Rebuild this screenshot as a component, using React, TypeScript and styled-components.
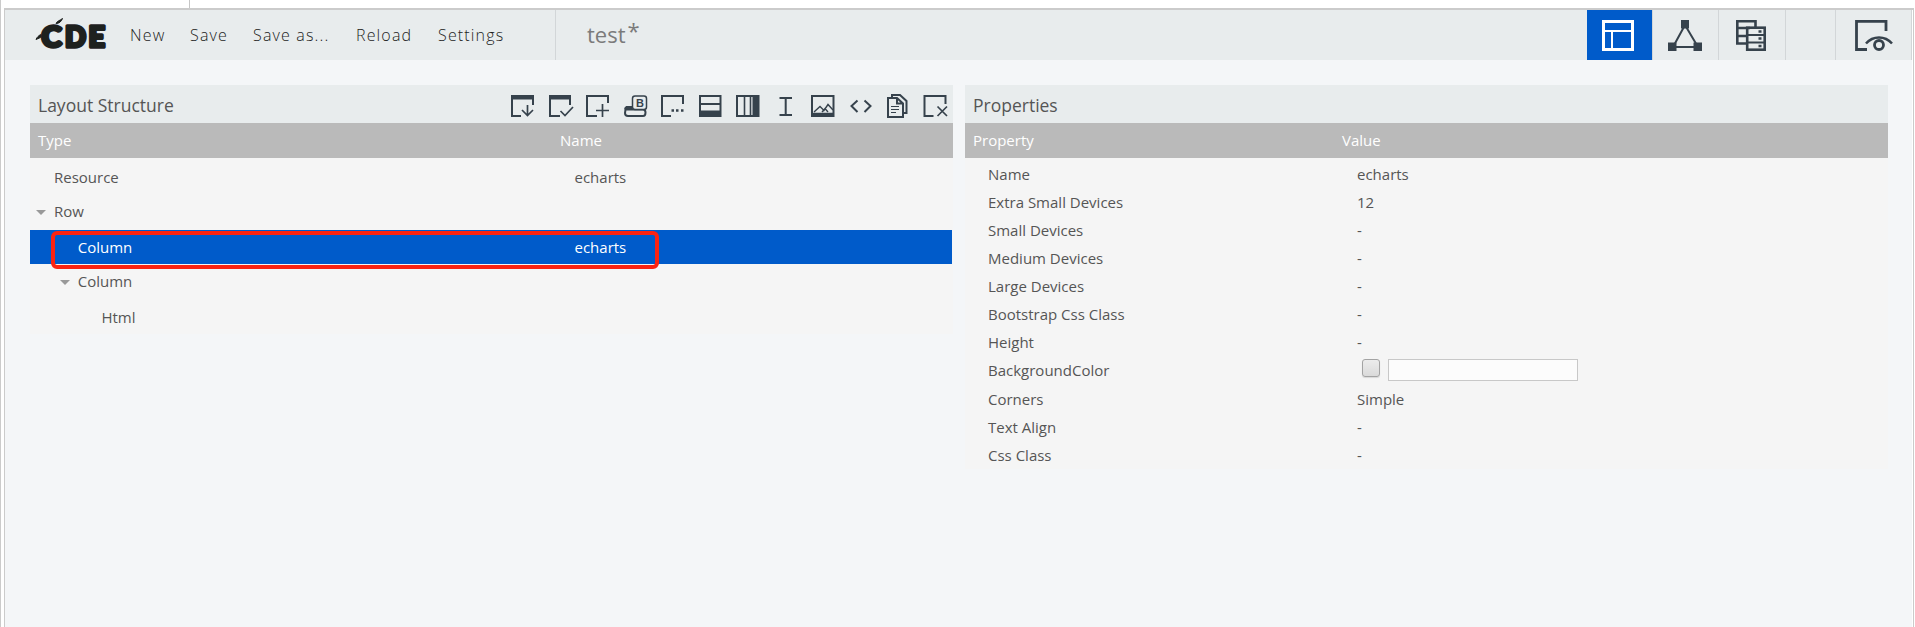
import React from "react";
import styled, { createGlobalStyle } from "styled-components";

const Global = createGlobalStyle`
  * { box-sizing: border-box; }
  body { margin: 0; background: #fff; font-family: "Open Sans", "Noto Sans", sans-serif; overflow: hidden; }
`;

const INK = "#36424c";

const Page = styled.div`
  height: 627px;
  display: flex;
  flex-direction: column;
  padding: 0 1px 0 4px;
  background: linear-gradient(90deg, #cbcbcb 0 1px, #fff 1px);
`;
const TopStrip = styled.div`
  height: 8px;
  flex: none;
  display: flex;
`;
const TopCell = styled.div`
  width: 186px;
  border-right: 1px solid #c6c6c6;
`;
const Frame = styled.div`
  flex: 1;
  display: flex;
  flex-direction: column;
  border: solid #cbcbcb;
  border-width: 2px 1px 0 1px;
  padding-right: 1px;
  background: #f4f6f8 content-box;
`;
const Header = styled.header`
  height: 50px;
  display: flex;
  align-items: stretch;
  background: #e8eced;
  padding-left: 30px;
`;
const LogoBox = styled.div`
  width: 95px;
  padding-top: 6px;
`;
const Nav = styled.nav`
  width: 426px;
  display: flex;
  align-items: center;
  border-right: 1px solid #d2d6d8;
`;
const NavItem = styled.a<{ $w: number }>`
  width: ${(p) => p.$w}px;
  flex: none;
  font-size: 16px;
  line-height: 22px;
  padding-bottom: 1px;
  font-weight: 300;
  letter-spacing: 1.15px;
  color: #1c1c1c;
  white-space: nowrap;
`;
const DocTitle = styled.div`
  flex: 1;
  padding: 9px 0 0 31px;
  font-size: 22px;
  line-height: 30px;
  color: #7b7b7b;
`;
const Dirty = styled.span`
  margin-left: 2px;
  vertical-align: 4px;
  line-height: 1;
`;
const Tab = styled.button<{ $w: number; $active?: boolean; $nudge?: number }>`
  width: ${(p) => p.$w}px;
  padding: 0 ${(p) => p.$nudge ?? 0}px 0 0;
  border: 0;
  border-right: 1px solid #d2d6d8;
  background: ${(p) => (p.$active ? "#005bca" : "transparent")};
  display: flex;
  align-items: center;
  justify-content: center;
`;
const Panels = styled.main`
  display: grid;
  grid-template-columns: 923px 923px;
  gap: 12px;
  align-items: start;
  padding: 25px 0 0 25px;
`;
const Panel = styled.section`
  background: #f5f5f5;
`;
const PanelHeader = styled.div`
  height: 38px;
  background: #e8eced;
  display: flex;
  align-items: center;
  justify-content: space-between;
  padding: 2px 5.5px 0 8px;
`;
const PanelTitle = styled.h2`
  margin: 0;
  font-size: 17.5px;
  line-height: 24px;
  font-weight: 400;
  color: #555;
`;
const Tools = styled.div`
  display: flex;
  gap: 13.5px;
  padding-top: 4px;
`;
const HeadRow = styled.div<{ $c: number }>`
  height: 35px;
  display: grid;
  grid-template-columns: ${(p) => p.$c}px 1fr;
  align-items: center;
  padding: 0 0 1px 8px;
  background: #bababa;
  color: #fff;
  font-size: 15px;
  line-height: 20px;
`;
const TreeBody = styled.div`
  padding: 3px 1px 0 0;
`;
const TreeRow = styled.div<{ $selected?: boolean; $h: number; $lift: number }>`
  height: ${(p) => p.$h}px;
  padding-bottom: ${(p) => p.$lift}px;
  display: grid;
  grid-template-columns: 544.5px 1fr;
  align-items: center;
  font-size: 15px;
  line-height: 20px;
  color: ${(p) => (p.$selected ? "#fff" : "#555")};
  background: ${(p) => (p.$selected ? "#005bca" : "transparent")};
  position: relative;
`;
const TypeCell = styled.div<{ $level: number }>`
  display: flex;
  align-items: center;
  padding-left: ${(p) => 6 + p.$level * 23.7}px;
`;
const Twisty = styled.span<{ $open?: boolean }>`
  width: 18px;
  display: flex;
  padding-top: 3px;
  &::before {
    content: "";
    border: 5px solid transparent;
    border-top-color: ${(p) => (p.$open ? "#999" : "transparent")};
    border-bottom: 0;
  }
`;
const Highlight = styled.div`
  position: absolute;
  left: 21px;
  top: 1px;
  width: 608px;
  height: 38px;
  border: 4px solid #fa2312;
  border-radius: 6px;
  z-index: 1;
`;
const PropBody = styled.div`
  padding: 2px 0 0;
`;
const PropRow = styled.div<{ $extra?: number }>`
  height: ${(p) => 28 + (p.$extra ?? 0)}px;
  padding: 0 0 ${(p) => p.$extra ?? 0}px 23px;
  display: grid;
  grid-template-columns: 369px 1fr;
  align-items: center;
  font-size: 15px;
  line-height: 20px;
  color: #555;
`;
const ColorField = styled.div`
  align-self: start;
  display: flex;
  align-items: flex-start;
  gap: 8px;
  padding: 3px 0 0 5px;
`;
const Check = styled.span`
  width: 18px;
  height: 18px;
  border: 1px solid #a3a3a3;
  border-radius: 3px;
  background: linear-gradient(#ececec, #dadada);
  box-shadow: 0 1px 1px rgba(0, 0, 0, 0.12);
`;
const ColorInput = styled.span`
  width: 190px;
  height: 22px;
  border: 1px solid #c8c8c8;
  background: #fcfcfc;
`;

const Logo = () => (
  <svg width="76" height="36" viewBox="0 0 76 36" fill="#1e211f" stroke="#1e211f">
    <g fontFamily="Lato, sans-serif" fontWeight="900" fontSize="28" strokeWidth="3.4" strokeLinejoin="round">
      <text x="6.5" y="30.5" textLength="20" lengthAdjust="spacingAndGlyphs">C</text>
      <text x="30" y="30.5" textLength="21" lengthAdjust="spacingAndGlyphs">D</text>
      <text x="53.5" y="30.5" textLength="16.500" lengthAdjust="spacingAndGlyphs">E</text>
    </g>
    <path d="M21 7.500C22 5 25 4.500 27.500 2.500C26.500 5.500 24 7.500 21 7.500ZM1 23.500C2 21 3.500 20 5.500 18.500V21.500Z" strokeWidth="1" />
  </svg>
);

const toolIcons: { name: string; art: React.ReactNode }[] = [
  { name: "save template", art: <><path d="M22 10V1H1V21H10" /><path d="M1 2.500H22" strokeWidth="4" /><path d="M16.500 10V21M11 15L16.500 20.500L22 15" strokeWidth="1.700" /></> },
  { name: "apply template", art: <><path d="M21 10V1H1V21H11" /><path d="M1 2.500H21" strokeWidth="4" /><path d="M11.500 16L16 20.500L24 12" strokeWidth="1.700" /></> },
  { name: "add resource", art: <><path d="M22 8V1H1V21H11" /><path d="M16.500 9V22M10 15.500H23" strokeWidth="1.700" /></> },
  { name: "add bootstrap panel", art: <><path d="M8 12H3.500Q1.500 12 1 14.500M1.500 14.500H19.500Q21.500 15 21.500 17.500Q21.500 21 19 21H4Q1 21 1 18Z" /><path d="M2 12.500H8" strokeWidth="3" /><rect x="8.500" y="1" width="14" height="13.500" rx="2.500" fill="#e8eced" strokeWidth="1.500" /><text x="12" y="12" fontFamily="Liberation Sans, sans-serif" fontSize="11" fontWeight="700" fill={INK} stroke="none">B</text></> },
  { name: "add freeform", art: <><path d="M22 9V1H1V21H10" /><path d="M10.500 15.500H13M15 15.500H17.500M20 15.500H22.500" strokeWidth="2.500" /></> },
  { name: "add row", art: <><rect x="1" y="1" width="20.500" height="20" /><path d="M1 9H21.500" /><path d="M1 18.500H21.500" strokeWidth="6" /></> },
  { name: "add column", art: <><rect x="1" y="1" width="21.500" height="20" /><path d="M8.500 1V21M14.500 1V21" strokeWidth="1.600" /><path d="M19.500 1V21" strokeWidth="6" /></> },
  { name: "add space", art: <path d="M5.500 3H18M5.500 20H18M11.700 3V20" /> },
  { name: "add image", art: <><rect x="1" y="1" width="21.500" height="20" /><path d="M2 19.500H22" strokeWidth="3.500" /><path d="M3 17L9 11.500L13 15.500L17 9.500L22 15M11 17L14 13.500L17 17" strokeWidth="1.400" /></> },
  { name: "add html", art: <path d="M8.500 5.500L2.500 11L8.500 17M15.500 5.500L21.500 11L15.500 17" /> },
  { name: "duplicate", art: <><path d="M6 3V0H14L20.500 6V18H18" /><path d="M2 3H11L17 8.500V22H2ZM11 3V8.500H17" /><path d="M5 11.500H13M5 14.500H13M5 17.500H10" strokeWidth="1.200" /></> },
  { name: "delete", art: <><path d="M21.500 9V1H0.500V21H9.500" /><path d="M13.500 11.500L23 21M23 11.500L13.500 21" strokeWidth="1.700" /></> },
];

const ToolIcon = ({ name, children }: { name: string; children: React.ReactNode }) => (
  <svg width="24" height="24" viewBox="0 0 24 24" fill="none" stroke={INK} strokeWidth="2" aria-label={name} overflow="visible">
    {children}
  </svg>
);

const LayoutIcon = () => (
  <svg width="32" height="31" viewBox="0 0 32 31" fill="none" stroke="#fff">
    <rect x="1.500" y="1.500" width="29" height="28" strokeWidth="3" />
    <path d="M2 11H30M10 11V29" strokeWidth="2" />
  </svg>
);
const ComponentsIcon = () => (
  <svg width="34" height="31" viewBox="0 0 34 31" stroke={INK} fill={INK}>
    <path d="M17 5L5 27H30Z" fill="none" strokeWidth="2" />
    <path d="M13 0H21V8.500H13ZM0 22.500H8.500V31H0ZM25.500 22.500H34V31H25.500Z" stroke="none" />
  </svg>
);
const DataIcon = () => (
  <svg width="30" height="31" viewBox="0 0 30 31" fill="none" stroke={INK} strokeWidth="2.600">
    <path d="M10 23.500H1.300V1.300H19.500V8M1 8H14M1 16H10" />
    <rect x="11.200" y="7.700" width="17.500" height="22" />
    <path d="M11 15H29M11 22.500H29" strokeWidth="1.800" />
    <path d="M22.500 11.500H25.500M22.500 18.500H25.500M22.500 26H25.500" strokeWidth="2.600" />
  </svg>
);
const PreviewIcon = () => (
  <svg width="38" height="31" viewBox="0 0 38 31" fill="none" stroke={INK} strokeWidth="2.800">
    <path d="M31 11V1.400H1.500V29.500H12" />
    <path d="M11 23.500C18 15.500 30 15.500 37 23.500" strokeWidth="2.500" />
    <circle cx="24" cy="25" r="4.500" />
  </svg>
);

const tree = [
  { type: "Resource", name: "echarts", level: 0, h: 34, lift: 2 },
  { type: "Row", name: "", level: 0, open: true, h: 35, lift: 3 },
  { type: "Column", name: "echarts", level: 1, selected: true, h: 34, lift: 0 },
  { type: "Column", name: "", level: 1, open: true, h: 35, lift: 2 },
  { type: "Html", name: "", level: 2, h: 35, lift: 0 },
];

const before = [
  ["Name", "echarts"],
  ["Extra Small Devices", "12"],
  ["Small Devices", "-"],
  ["Medium Devices", "-"],
  ["Large Devices", "-"],
  ["Bootstrap Css Class", "-"],
  ["Height", "-"],
];
const after = [
  ["Corners", "Simple"],
  ["Text Align", "-"],
  ["Css Class", "-"],
];

export default function App() {
  return (
    <Page>
      <Global />
      <TopStrip><TopCell /></TopStrip>
      <Frame>
        <Header>
          <LogoBox><Logo /></LogoBox>
          <Nav>
            <NavItem $w={60}>New</NavItem>
            <NavItem $w={63}>Save</NavItem>
            <NavItem $w={103}>Save as...</NavItem>
            <NavItem $w={82}>Reload</NavItem>
            <NavItem $w={80}>Settings</NavItem>
          </Nav>
          <DocTitle>test<Dirty>*</Dirty></DocTitle>
          <Tab $w={66} $active $nudge={4}><LayoutIcon /></Tab>
          <Tab $w={66} $nudge={2}><ComponentsIcon /></Tab>
          <Tab $w={67} $nudge={2}><DataIcon /></Tab>
          <Tab $w={50} />
          <Tab $w={76}><PreviewIcon /></Tab>
        </Header>
        <Panels>
          <Panel>
            <PanelHeader>
              <PanelTitle>Layout Structure</PanelTitle>
              <Tools>
                {toolIcons.map((t) => <ToolIcon key={t.name} name={t.name}>{t.art}</ToolIcon>)}
              </Tools>
            </PanelHeader>
            <HeadRow $c={522}><span>Type</span><span>Name</span></HeadRow>
            <TreeBody>
              {tree.map((r, i) => (
                <TreeRow key={i} $selected={r.selected} $h={r.h} $lift={r.lift}>
                  <TypeCell $level={r.level}><Twisty $open={r.open} />{r.type}</TypeCell>
                  <span>{r.name}</span>
                  {r.selected && <Highlight />}
                </TreeRow>
              ))}
            </TreeBody>
          </Panel>
          <Panel>
            <PanelHeader><PanelTitle>Properties</PanelTitle></PanelHeader>
            <HeadRow $c={369}><span>Property</span><span>Value</span></HeadRow>
            <PropBody>
              {before.map(([k, v]) => <PropRow key={k}><span>{k}</span><span>{v}</span></PropRow>)}
              <PropRow $extra={1}>
                <span>BackgroundColor</span>
                <ColorField><Check /><ColorInput /></ColorField>
              </PropRow>
              {after.map(([k, v]) => <PropRow key={k}><span>{k}</span><span>{v}</span></PropRow>)}
            </PropBody>
          </Panel>
        </Panels>
      </Frame>
    </Page>
  );
}
